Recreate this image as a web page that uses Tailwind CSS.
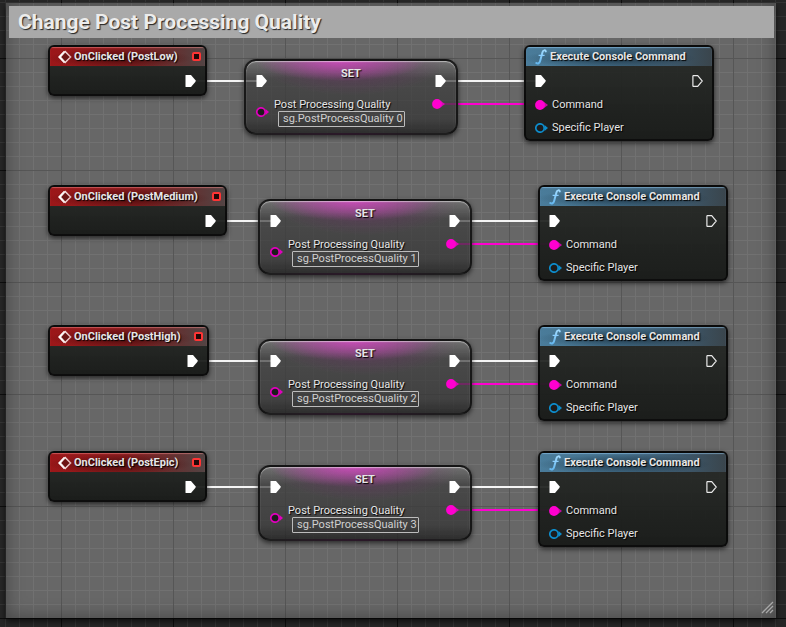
<!DOCTYPE html>
<html lang="en">
<head>
<meta charset="utf-8">
<title>Change Post Processing Quality</title>
<script src="https://cdn.jsdelivr.net/npm/@tailwindcss/browser@4"></script>
</head>
<body class="bg-[#262626] font-[Roboto,sans-serif] text-[#e6e6e6]">
<svg class="absolute size-0" aria-hidden="true">
  <defs>
    <pattern id="minor" width="14" height="14" x="5" y="2" patternUnits="userSpaceOnUse"><path d="M0 .5H14M.5 0V14" stroke="#343434"/></pattern>
    <pattern id="major" width="112" height="112" x="61" y="58" patternUnits="userSpaceOnUse"><path d="M0 .5H112M.5 0V112" stroke="#0e0e0e"/></pattern>
    <linearGradient id="diamond" x1="0" x2="1"><stop offset="0" stop-color="#fff"/><stop offset="1" stop-color="#e3b5b5"/></linearGradient>
    <linearGradient id="fn" gradientUnits="userSpaceOnUse" x1="0" x2="0" y1="0" y2="16"><stop offset="0" stop-color="#a5dcff"/><stop offset="1" stop-color="#5fb4ee"/></linearGradient>
    <symbol id="exec" viewBox="0 0 11 12"><path d="M1 0H6L10.500 5.200V6.800L6 12H1Q.5 12 .5 11.500V.5Q.5 0 1 0Z" fill="#fff"/></symbol>
    <symbol id="exec-open" viewBox="0 0 11 12"><path d="M1.500 .6H5.700L10.300 6L5.700 11.400H1.500Q.9 11.400 .9 10.800V1.200Q.9 .6 1.500 .6Z" fill="none" stroke="#e8e8e8" stroke-width="1.200"/></symbol>
    <symbol id="pin" viewBox="0 0 14 10"><path d="M9 2L13 5L9 8Z" fill="currentColor" opacity=".75"/><circle cx="5" cy="5" r="4.900" fill="currentColor"/></symbol>
    <symbol id="pin-open" viewBox="0 0 14 10"><path d="M9.500 2L13 5L9.500 8Z" fill="currentColor"/><circle cx="5" cy="5" r="4.200" fill="#1c1c1c" stroke="currentColor" stroke-width="1.700"/></symbol>
    <symbol id="event" viewBox="0 0 14 14"><path d="M6 .8L0 7L6 13.200L7.200 12L3.700 7L7.200 2Z" fill="#fff"/><path d="M7.200 1.500L12.600 7L7.200 12.500L2.200 7Z" fill="#6c1414" stroke="url(#diamond)" stroke-width="1.500"/></symbol>
    <symbol id="func" viewBox="0 0 12 16"><path d="M10.800 2.400C10.500 .9 8.200 .9 7.500 3.300L5.200 11.800C4.600 14.300 2.700 15.100 1.300 14" fill="none" stroke="url(#fn)" stroke-width="2" stroke-linecap="round"/><path d="M3.600 6.300H9.600" stroke="#8ccfff" stroke-width="1.300"/></symbol>
  </defs>
</svg>
<main class="relative flex min-h-screen flex-col overflow-hidden pt-[3px] pr-[10px] pb-[9px] pl-[6px]">
  <svg class="absolute inset-0 h-full w-full" aria-hidden="true"><rect width="100%" height="100%" fill="url(#minor)"/><rect width="100%" height="100%" fill="url(#major)"/></svg>
  <section class="relative flex flex-1 flex-col bg-white/30 p-[3px] pr-[2px] shadow-[0_3px_6px_rgba(0,0,0,0.7),inset_0_0_18px_rgba(0,0,0,0.35)]">
    <h1 class="bg-[#a9a9a9] px-[9px] text-[21px] leading-8 font-bold text-[#ececec] [text-shadow:1px_1px_1px_#222]">Change Post Processing Quality</h1>
    <svg class="mt-auto mb-px ml-auto size-[13px]" viewBox="0 0 13 13" aria-hidden="true"><path d="M1 12L12 1M5 12L12 5M9 12L12 9" stroke="#a8a8a8" stroke-width="1.300"/><path d="M3 12L12 3M7 12L12 7" stroke="#555" stroke-width=".8"/></svg>
  </section>
  <div id="graph" class="absolute inset-0"></div>
</main>
<script>
const icon = (id, cls) => `<svg class="${cls}" aria-hidden="true"><use href="#${id}"/></svg>`;
const rows = [
  { name: 'PostLow', y: 45, w: 159, dx: 0 },
  { name: 'PostMedium', y: 185, w: 179, dx: 14 },
  { name: 'PostHigh', y: 325, w: 161, dx: 14 },
  { name: 'PostEpic', y: 451, w: 159, dx: 14 },
];
const exec = 'h-3 w-[11px] shrink-0';
document.getElementById('graph').innerHTML = rows.map((r, i) => `
<div class="absolute inset-x-0 h-24" style="top:${r.y}px">
  <svg class="absolute inset-0 h-full w-full" aria-hidden="true">
    <path d="M${48 + r.w - 12} 36H${258 + r.dx}M${442 + r.dx} 36H${536 + r.dx}" stroke="#f4f4f4" stroke-width="2"/>
    <path d="M${442 + r.dx} 59H${538 + r.dx}" stroke="#ff00d0" stroke-width="2"/>
  </svg>
  <article class="absolute top-0 left-12 h-[51px] overflow-hidden rounded-md border-2 border-[#080808]/85 bg-linear-to-b from-[#272a27]/93 to-[#191b19]/97 shadow-[0_2px_5px_rgba(0,0,0,0.65)]" style="width:${r.w}px">
    <header class="flex h-[19px] items-center bg-[radial-gradient(ellipse_at_45%_60%,rgba(60,8,8,0.8),transparent_60%),linear-gradient(90deg,#9c1719,#861c1e_50%,#5f3535_85%,#524444)] pr-1 pl-2 shadow-[inset_0_1px_1px_rgba(255,150,150,0.5)]">
      ${icon('event', 'size-[14px] shrink-0')}
      <h2 class="ml-[2px] text-[11px] leading-4 font-bold whitespace-nowrap [text-shadow:1px_1px_1px_#000]">OnClicked (${r.name})</h2>
      <span class="ml-auto size-[9px] shrink-0 rounded-[2px] border-2 border-[#ff3434] bg-[#240808]"></span>
    </header>
    <div class="flex justify-end pt-[9px] pr-[9px]">${icon('exec', exec)}</div>
  </article>
  <article class="absolute top-[14px] h-[76px] w-[214px] rounded-xl border-2 border-[#101010]/85 bg-[radial-gradient(ellipse_85px_20px_at_45%_0,rgba(225,75,205,0.75),transparent),radial-gradient(ellipse_95px_34px_at_50%_0,rgba(130,35,120,0.45),transparent),linear-gradient(180deg,rgba(115,115,115,0.8),rgba(62,62,62,0.72)_24%,rgba(52,52,52,0.72)_80%,rgba(32,32,32,0.8))] shadow-[0_2px_5px_rgba(0,0,0,0.6),inset_0_1px_1px_rgba(255,255,255,0.5)]" style="left:${244 + r.dx}px">
    <h2 class="pt-[5px] text-center text-[11px] leading-4 font-bold [text-shadow:1px_1px_1px_#000]">SET</h2>
    <div class="-mt-[7px] flex justify-between px-[10px]">${icon('exec', exec)}${icon('exec', exec)}</div>
    <div class="mt-[10px] flex items-start px-[10px]">
      ${icon('pin-open', 'mt-[10px] h-[10px] w-[14px] shrink-0 text-[#e000bd]')}
      <div class="ml-1 flex flex-col">
        <label for="quality-${i}" class="text-[11px] leading-4 [text-shadow:1px_1px_1px_#000]">Post Processing Quality</label>
        <input id="quality-${i}" class="-mt-[2px] ml-1 h-4 w-[127px] rounded-[1px] border border-[#bcbcbc] bg-transparent pl-1 text-[11px] text-[#d0d0d0] outline-none" value="sg.PostProcessQuality ${i}">
      </div>
      ${icon('pin', 'mt-[2px] ml-auto h-[10px] w-[14px] shrink-0 text-[#ff00d0]')}
    </div>
  </article>
  <article class="absolute top-0 h-24 w-[190px] overflow-hidden rounded-md border-2 border-[#080808]/85 bg-linear-to-b from-[#272a27]/93 to-[#191b19]/97 shadow-[0_2px_5px_rgba(0,0,0,0.65)]" style="left:${524 + r.dx}px">
    <header class="flex h-[19px] items-center bg-[radial-gradient(ellipse_at_45%_60%,rgba(20,38,52,0.7),transparent_60%),linear-gradient(90deg,#4a7c9a,#436d88_45%,#3c5567_80%,#3a454c)] pl-[9px] shadow-[inset_0_1px_1px_rgba(160,215,255,0.5)]">
      ${icon('func', 'h-4 w-3 shrink-0')}
      <h2 class="ml-[3px] text-[11px] leading-4 font-bold whitespace-nowrap [text-shadow:1px_1px_1px_#000]">Execute Console Command</h2>
    </header>
    <div class="flex justify-between px-[9px] pt-[9px]">${icon('exec', exec)}${icon('exec-open', exec)}</div>
    <ul class="mt-[10px] flex flex-col gap-[7px] pl-[9px] text-[11px] leading-4 [text-shadow:1px_1px_1px_#000]">
      <li class="flex items-center gap-[3px]">${icon('pin', 'h-[10px] w-[14px] shrink-0 text-[#ff00d0]')}Command</li>
      <li class="flex items-center gap-[3px]">${icon('pin-open', 'h-[10px] w-[14px] shrink-0 text-[#0d8ccb]')}Specific Player</li>
    </ul>
  </article>
</div>`).join('');
</script>
</body>
</html>
